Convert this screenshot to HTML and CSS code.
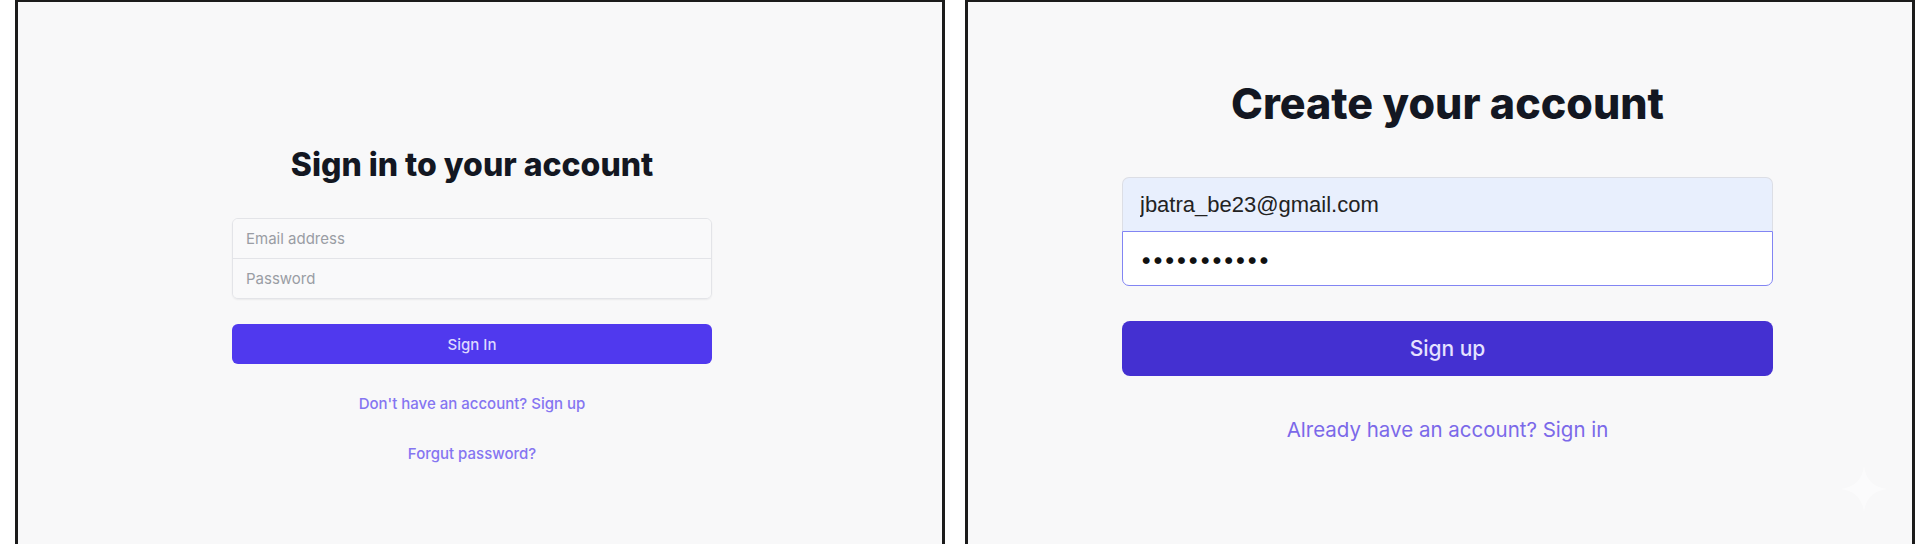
FILE: index.html
```html
<!DOCTYPE html>
<html lang="en">
<head>
  <meta charset="UTF-8" />
  <meta name="viewport" content="width=device-width, initial-scale=1.0" />
  <title>Auth screens</title>
  <link rel="stylesheet" href="styles.css">
</head>
<body>

<div class="screens">

  <!-- Вход -->
  <div class="frame frame-signin">
    <div class="auth">
      <h2 class="auth-title">Sign in to your account</h2>
      <form class="auth-form">
        <div class="field-group">
          <input class="field" type="email" placeholder="Email address">
          <input class="field" type="password" placeholder="Password">
        </div>
        <button class="button" type="button">Sign In</button>
      </form>
      <a class="link" href="#">Don't have an account? Sign up</a>
      <a class="link" href="#">Forgut password?</a>
    </div>
  </div>

  <!-- Регистрация -->
  <div class="frame frame-signup">
    <div class="auth">
      <h2 class="auth-title">Create your account</h2>
      <form class="auth-form">
        <div class="field-group">
          <input class="field field-filled" type="email" value="jbatra_be23@gmail.com">
          <input class="field field-focus" type="password" value="jbatra12345">
        </div>
        <button class="button" type="button">Sign up</button>
      </form>
      <a class="link" href="#">Already have an account? Sign in</a>
    </div>
  </div>

</div>

<svg class="sparkle" width="48" height="48" viewBox="0 0 48 48">
  <path d="M24 0 C25 14 34 23 48 24 C34 25 25 34 24 48 C23 34 14 25 0 24 C14 23 23 14 24 0 Z" fill="#ffffff"/>
</svg>

</body>
</html>
```

FILE: styles.css
```css
body {
  margin: 0;
  background: #ffffff;
  font-family: 'Inter', sans-serif;
  overflow: hidden;
}
.screens {
  display: flex;
  gap: 20px;
  padding-left: 15px;
  height: 100vh;
}
.frame {
  box-sizing: border-box;
  height: 100%;
  background: #f8f8f9;
  border: 3px solid #1b1b1b;
  border-top-width: 2px;
  border-bottom: none;
  display: flex;
  justify-content: center;
}
.auth {
  display: flex;
  flex-direction: column;
  align-items: center;
}
.auth-title {
  margin: 0;
  color: #131722;
  font-weight: 800;
}
.auth-form {
  display: flex;
  flex-direction: column;
  width: 100%;
}
.field-group {
  display: flex;
  flex-direction: column;
}
.field {
  box-sizing: border-box;
  margin: 0;
  font-family: 'Inter', sans-serif;
  outline: none;
  background: #f9f9fa;
}
.field::placeholder {
  color: #9a9da4;
}
.button {
  border: none;
  font-family: 'Inter', sans-serif;
  font-weight: 500;
  cursor: pointer;
}
.link {
  text-decoration: none;
}

/* Вход */
.frame-signin {
  width: 930px;
  padding: 143px 16px 0 0;
}
.frame-signin .auth {
  width: 480px;
}
.frame-signin .auth-title {
  font-size: 32px;
  line-height: 40px;
}
.frame-signin .field-group {
  margin-top: 33px;
  border: 1px solid #e3e4e8;
  border-radius: 6px;
  box-shadow: 0 1px 2px rgba(0, 0, 0, 0.06);
  overflow: hidden;
}
.frame-signin .field {
  height: 39px;
  border: none;
  padding: 0 13px;
  font-size: 15px;
  color: #333;
}
.frame-signin .field + .field {
  height: 40px;
  border-top: 1px solid #e3e4e8;
}
.frame-signin .button {
  margin-top: 25px;
  height: 40px;
  border-radius: 6px;
  background: #5039ee;
  color: #ddd8ff;
  font-size: 15px;
}
.frame-signin .link {
  margin-top: 30px;
  font-size: 15px;
  line-height: 20px;
  font-weight: 500;
  color: #8575f1;
}

/* Регистрация */
.frame-signup {
  width: 950px;
  padding: 76px 0 0 15px;
}
.frame-signup .auth {
  width: 651px;
}
.frame-signup .auth-title {
  font-size: 43px;
  line-height: 50px;
}
.frame-signup .field-group {
  margin-top: 49px;
}
.frame-signup .field {
  padding: 0 17px;
  font-size: 22px;
}
.field-filled {
  height: 54px;
  border: 1px solid #dcdee5;
  border-bottom: none;
  border-radius: 7px 7px 0 0;
  background: #e8effd;
  color: #222;
  font-family: 'Liberation Sans', Arial, sans-serif;
}
.field-focus {
  height: 55px;
  border: 1.5px solid #8285f3;
  border-radius: 0 0 7px 7px;
  background: #ffffff;
  color: #111;
  letter-spacing: -0.6px;
}
.frame-signup .button {
  margin-top: 35px;
  height: 55px;
  border-radius: 8px;
  background: #4430d1;
  color: #e6e2ff;
  font-size: 21px;
}
.frame-signup .link {
  margin-top: 40px;
  font-size: 20.5px;
  line-height: 28px;
  color: #7b69e9;
}

.sparkle {
  position: absolute;
  left: 1840px;
  top: 465px;
  opacity: 0.5;
}
```
